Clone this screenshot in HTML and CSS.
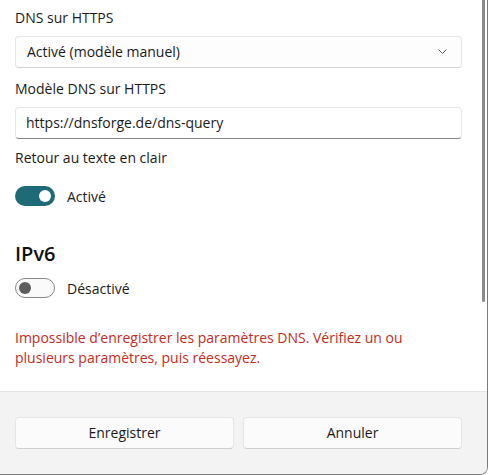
FILE: index.html
```html
<!DOCTYPE html>
<html lang="fr">
<head>
<meta charset="utf-8">
<title>DNS</title>
<link rel="stylesheet" href="styles.css">
</head>
<body>
<div class="dialog">
  <div class="body">
    <div class="scroll-thumb"></div>
    <div class="label first">DNS sur HTTPS</div>
    <div class="combo">
      <span>Activé (modèle manuel)</span>
      <svg class="chevron" width="9" height="5" viewBox="0 0 9 5"><path d="M0.5 0.5 L4.5 4.5 L8.5 0.5" fill="none" stroke="#5c5c5c" stroke-width="1"/></svg>
    </div>
    <div class="label second">Modèle DNS sur HTTPS</div>
    <div class="textbox">https://dnsforge.de/dns-query</div>
    <div class="label third">Retour au texte en clair</div>
    <div class="toggle-row on-row">
      <span class="toggle on"><span class="knob"></span></span>
      <span>Activé</span>
    </div>
    <h2 class="heading">IPv6</h2>
    <div class="toggle-row off-row">
      <span class="toggle off"><span class="knob"></span></span>
      <span>Désactivé</span>
    </div>
    <p class="error">Impossible d’enregistrer les paramètres DNS. Vérifiez un ou<br>plusieurs paramètres, puis réessayez.</p>
  </div>
  <div class="footer">
    <button class="btn">Enregistrer</button>
    <button class="btn">Annuler</button>
  </div>
</div>
</body>
</html>
```

FILE: styles.css
```css
html, body {
  margin: 0;
  padding: 0;
  background: #ffffff;
}

body {
  font-family: "Open Sans", "Noto Sans", sans-serif;
  font-size: 14px;
  color: #1a1a1a;
}

.dialog {
  width: 488px;
  height: 475px;
  box-sizing: border-box;
  border-right: 1px solid #7a7a7a;
  border-bottom: 1px solid #7a7a7a;
  border-bottom-right-radius: 8px;
  overflow: hidden;
  display: flex;
  flex-direction: column;
  background: #ffffff;
}

.body {
  position: relative;
  height: 391px;
  flex: none;
  padding: 0 25px 0 15px;
  box-sizing: border-box;
  display: flex;
  flex-direction: column;
}

.scroll-thumb {
  position: absolute;
  top: 0;
  right: 2px;
  width: 3px;
  height: 302px;
  background: #8a8a8a;
  border-radius: 0 0 2px 2px;
}

.label {
  line-height: 20px;
  margin-bottom: 8px;
}

.label.first { margin-top: 8px; }
.label.second { margin-top: 11px; }
.label.third { margin-top: 9px; margin-bottom: 0; }

.combo {
  height: 32px;
  box-sizing: border-box;
  border: 1px solid #e6e6e6;
  border-bottom-color: #d2d2d2;
  border-radius: 4px;
  background: #fdfdfd;
  display: flex;
  align-items: center;
  justify-content: space-between;
  padding: 0 14px 1px 11px;
}

.chevron {
  display: block;
}

.textbox {
  height: 32px;
  box-sizing: border-box;
  border: 1px solid #e6e6e6;
  border-bottom-color: #868686;
  border-radius: 4px;
  background: #ffffff;
  display: flex;
  align-items: center;
  padding: 0 10px 1px 10px;
}

.toggle-row {
  display: flex;
  align-items: center;
  gap: 12px;
  height: 20px;
}

.on-row { margin-top: 18px; }
.off-row { margin-top: 10px; }

.toggle {
  width: 40px;
  height: 20px;
  box-sizing: border-box;
  border-radius: 10px;
  display: flex;
  align-items: center;
  flex: none;
}

.toggle.on {
  background: #1e6a76;
  justify-content: flex-end;
  padding-right: 4px;
}

.toggle.on .knob {
  width: 12px;
  height: 12px;
  border-radius: 50%;
  background: #ffffff;
}

.toggle.off {
  border: 1px solid #878787;
  background: #fafafa;
  padding-left: 3px;
}

.toggle.off .knob {
  width: 12px;
  height: 12px;
  border-radius: 50%;
  background: #5d5d5d;
}

.heading {
  margin: 34px 0 0 0;
  font-size: 20px;
  font-weight: 600;
  line-height: 28px;
  color: #111111;
}

.error {
  margin: 30px 0 0 0;
  line-height: 20px;
  color: #c42b1c;
}

.footer {
  flex: 1;
  border-top: 1px solid #e5e5e5;
  background: #f3f3f3;
  padding: 25px 25px 0 15px;
  display: grid;
  grid-template-columns: 1fr 1fr;
  column-gap: 9px;
  align-content: start;
}

.btn {
  height: 32px;
  box-sizing: border-box;
  border: 1px solid #e5e5e5;
  border-bottom-color: #cfcfcf;
  border-radius: 4px;
  background: #fbfbfb;
  font-family: inherit;
  font-size: 14px;
  color: #1a1a1a;
  padding: 0 0 1px 0;
}
```
